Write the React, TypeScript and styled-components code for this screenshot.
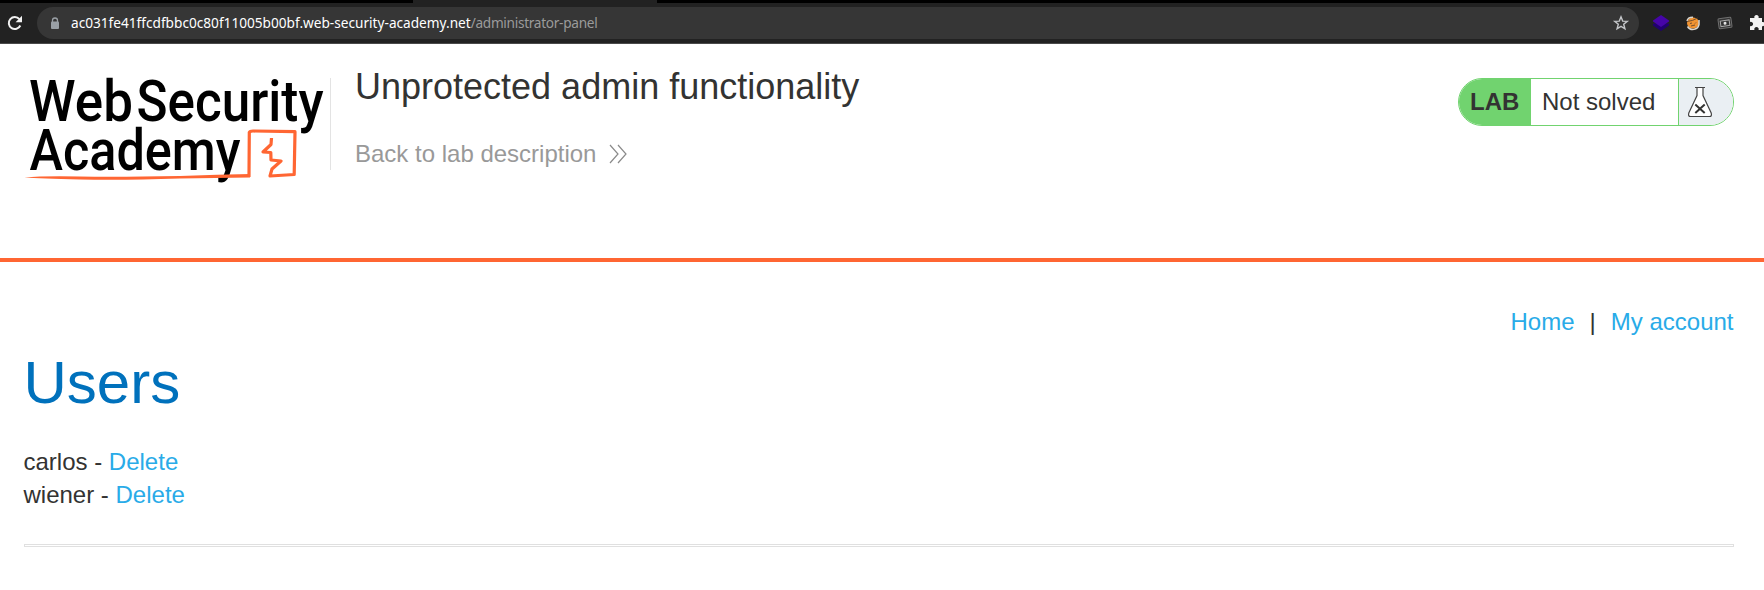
import React from "react";
import styled, { createGlobalStyle } from "styled-components";

const Global = createGlobalStyle`
  * { box-sizing: border-box; }
  body { margin: 0; background: #fff; color: #333332; font: 24px/33px "Liberation Sans", Arial, sans-serif; overflow: hidden; }
  svg { display: block; flex: none; overflow: visible; }
`;

const TabStrip = styled.div`
  display: flex;
  height: 3px;
  background: #000;
`;
const ActiveTab = styled.div`
  width: 244px;
  margin-left: 413px;
  background: #222;
`;
const Toolbar = styled.div`
  display: flex;
  align-items: center;
  height: 41px;
  padding: 0 0 0 7px;
  background: #222;
  border-bottom: 1px solid #4a4a4a;
`;
const AddressBar = styled.div`
  display: flex;
  flex: none;
  align-items: center;
  width: 1602px;
  height: 32px;
  margin-left: 14px;
  padding: 0 10px 0 13px;
  border-radius: 16px;
  background: #363636;
`;
const Url = styled.div`
  flex: 1;
  margin-left: 11px;
  color: #9b9b9b;
  font: 13.65px/20px "Noto Sans", sans-serif;
  letter-spacing: -0.3px;
  white-space: nowrap;
`;
const Host = styled.span`
  color: #fff;
  letter-spacing: 0;
`;
const Extensions = styled.div`
  display: flex;
  flex: none;
  align-items: center;
  gap: 16px;
  margin-left: 14px;
`;

const Header = styled.header`
  display: flex;
  height: 218px;
  padding: 34px 30px 0 24px;
  border-bottom: 4px solid #ff6633;
`;
const Divider = styled.div`
  width: 1px;
  height: 92px;
  background: #e3e3e3;
`;
const TitleBlock = styled.div`
  flex: 1;
  padding-left: 24px;
`;
const Title = styled.h2`
  margin: -11px 0 0;
  font-size: 36px;
  font-weight: 400;
  line-height: 40px;
`;
const BackLink = styled.a`
  display: flex;
  align-items: center;
  gap: 13px;
  margin-top: 30px;
  color: #999;
`;
const Status = styled.div`
  display: flex;
  width: 276px;
  height: 48px;
  border: 1px solid #71d36f;
  border-radius: 24px;
  overflow: hidden;
  line-height: 46px;
`;
const StatusTag = styled.span`
  width: 72px;
  padding-left: 11px;
  background: #71d36f;
  font-weight: 700;
`;
const StatusText = styled.span`
  flex: 1;
  padding-left: 11px;
`;
const StatusIcon = styled.span`
  width: 55px;
  padding: 7px 0 0 8px;
  border-left: 1px solid #71d36f;
  background: #eaeff3;
`;

const Content = styled.main`
  padding: 43px 30px 0 23.5px;
`;
const Nav = styled.nav`
  display: flex;
  justify-content: flex-end;
  gap: 15px;
  margin-right: 0.5px;
`;
const Link = styled.a`
  color: #29abe8;
`;
const Heading = styled.h1`
  margin: 12px 0 0;
  color: #0071bc;
  font-size: 60px;
  font-weight: 400;
  line-height: 66px;
`;
const UserList = styled.section`
  margin-top: 29px;
`;
const Rule = styled.hr`
  height: 3px;
  margin: 33px 0 0;
  border: 1px solid #e0e0e0;
`;

const Reload = () => (
  <svg width="16" height="16" viewBox="0 0 16 16">
    <path d="M13.300 10.500A6 6 0 1 1 12.400 4.200" fill="none" stroke="#f1f1f1" strokeWidth="2" />
    <path d="M15 .8v6.400H8.600z" fill="#f1f1f1" />
  </svg>
);
const Lock = () => (
  <svg width="10" height="13" viewBox="0 0 10 13">
    <path d="M2.500 5V3.500a2.500 2.500 0 0 1 5 0V5" fill="none" stroke="#9aa0a6" strokeWidth="1.300" />
    <rect x="1" y="4.500" width="8" height="7.500" rx="1" fill="#9aa0a6" />
  </svg>
);
const Star = () => (
  <svg width="16" height="16" viewBox="0 0 16 16">
    <path d="M8 1.800l1.700 4.300 4.600.3-3.600 2.900 1.200 4.500L8 11.300l-3.900 2.500 1.200-4.500L1.700 6.400l4.600-.3z" fill="none" stroke="#c4c6c9" strokeWidth="1.400" />
  </svg>
);
const Layers = () => (
  <svg width="16" height="16" viewBox="0 0 16 16">
    <path d="M0 8.500v2L8 16l8-5.500v-2z" fill="#210070" />
    <path d="M8 0l8 5.500v1L8 12 0 6.500v-1z" fill="#4605a8" />
  </svg>
);
const Cookie = () => (
  <svg width="16" height="16" viewBox="0 0 16 16">
    <ellipse cx="8" cy="8" rx="6" ry="5.500" transform="rotate(-20 8 8)" fill="#f29432" />
    <path d="M2.500 11.500A6.300 6.300 0 0 0 14 9.500V5M2 6Q3 2 8 2.200" stroke="#dcd6cd" strokeWidth="1.500" fill="none" />
    <path d="M2 6.500Q8 6 12.500 3M5 8.500l2-.5M10 8.500l1-1M6 11l4-1" stroke="#74502e" fill="none" />
  </svg>
);
const Ticket = () => (
  <svg width="16" height="16" viewBox="0 0 16 16">
    <g transform="rotate(-8 8 8)">
      <rect x="1.500" y="3" width="13" height="10" rx="1" fill="#333" stroke="#6f6f6f" />
      <rect x="3.500" y="5.500" width="9" height="5.500" fill="none" stroke="#aaa" />
      <circle cx="8" cy="8.200" r="1.500" fill="#e5e5e5" />
    </g>
  </svg>
);
const Puzzle = () => (
  <svg width="17" height="16" viewBox="0 0 17 16">
    <path d="M1 3h4.500a2.200 2.200 0 1 1 4 0H13v4a2.200 2.200 0 1 1 0 4.200V15H9.500a2.200 2.200 0 1 0-4 0H1v-4a2.200 2.200 0 1 0 0-4z" fill="#f1f1f1" />
  </svg>
);

const Logo = () => (
  <svg width="306" height="104" viewBox="24 78 306 104">
    <g fill="#000" fontFamily="Roboto, sans-serif" fontWeight="500" fontSize="57.500">
      <text x="29" y="121" textLength="104" lengthAdjust="spacingAndGlyphs">Web</text>
      <text x="136.500" y="121" textLength="187" lengthAdjust="spacingAndGlyphs">Security</text>
      <text x="29.500" y="169.500" textLength="211" lengthAdjust="spacingAndGlyphs">Academy</text>
    </g>
    <path d="M24.500 177.500Q43 175.800 80 176.500T180 176L217 174.800L250 174V177.500L180 178.600Q120 180.500 80 179.500T24.500 177.500Z" fill="#ff6633" />
    <path d="M249 177L249.300 132.500Q250 131 253 131L295 131.700L294.200 174.500L270 176L272 169L281 161L271 160L270.800 152.500L263 152L271 144.500L271.500 138" fill="none" stroke="#ff6633" strokeWidth="3.200" strokeLinejoin="round" />
  </svg>
);
const Chevrons = () => (
  <svg width="18" height="20" viewBox="0 0 18 20">
    <path d="M1 1l8 9-8 9M9 1l8 9-8 9" fill="none" stroke="#8a8a8a" strokeWidth="1.200" />
  </svg>
);
const Flask = () => (
  <svg width="26" height="32" viewBox="0 0 26 32">
    <path d="M8 1.500h10M10 2v7.500L1.800 27Q.8 30.500 3.500 30.500h19q2.700 0 1.700-3.500L16 9.500V2" fill="#fff" stroke="#444" strokeWidth="1.200" />
    <path d="M8.300 18.500l9.400 8.500M17.700 18.500l-9.400 8.500" stroke="#333332" strokeWidth="2" />
  </svg>
);

const users = ["carlos", "wiener"];

export default function App() {
  return (
    <>
      <Global />
      <TabStrip><ActiveTab /></TabStrip>
      <Toolbar>
        <Reload />
        <AddressBar>
          <Lock />
          <Url><Host>ac031fe41ffcdfbbc0c80f11005b00bf.web-security-academy.net</Host>/administrator-panel</Url>
          <Star />
        </AddressBar>
        <Extensions><Layers /><Cookie /><Ticket /><Puzzle /></Extensions>
      </Toolbar>
      <Header>
        <Logo />
        <Divider />
        <TitleBlock>
          <Title>Unprotected admin functionality</Title>
          <BackLink>Back to lab description<Chevrons /></BackLink>
        </TitleBlock>
        <Status>
          <StatusTag>LAB</StatusTag>
          <StatusText>Not solved</StatusText>
          <StatusIcon><Flask /></StatusIcon>
        </Status>
      </Header>
      <Content>
        <Nav><Link>Home</Link><span>|</span><Link>My account</Link></Nav>
        <Heading>Users</Heading>
        <UserList>
          {users.map((name) => (
            <div key={name}>{name} - <Link>Delete</Link></div>
          ))}
        </UserList>
        <Rule />
      </Content>
    </>
  );
}
